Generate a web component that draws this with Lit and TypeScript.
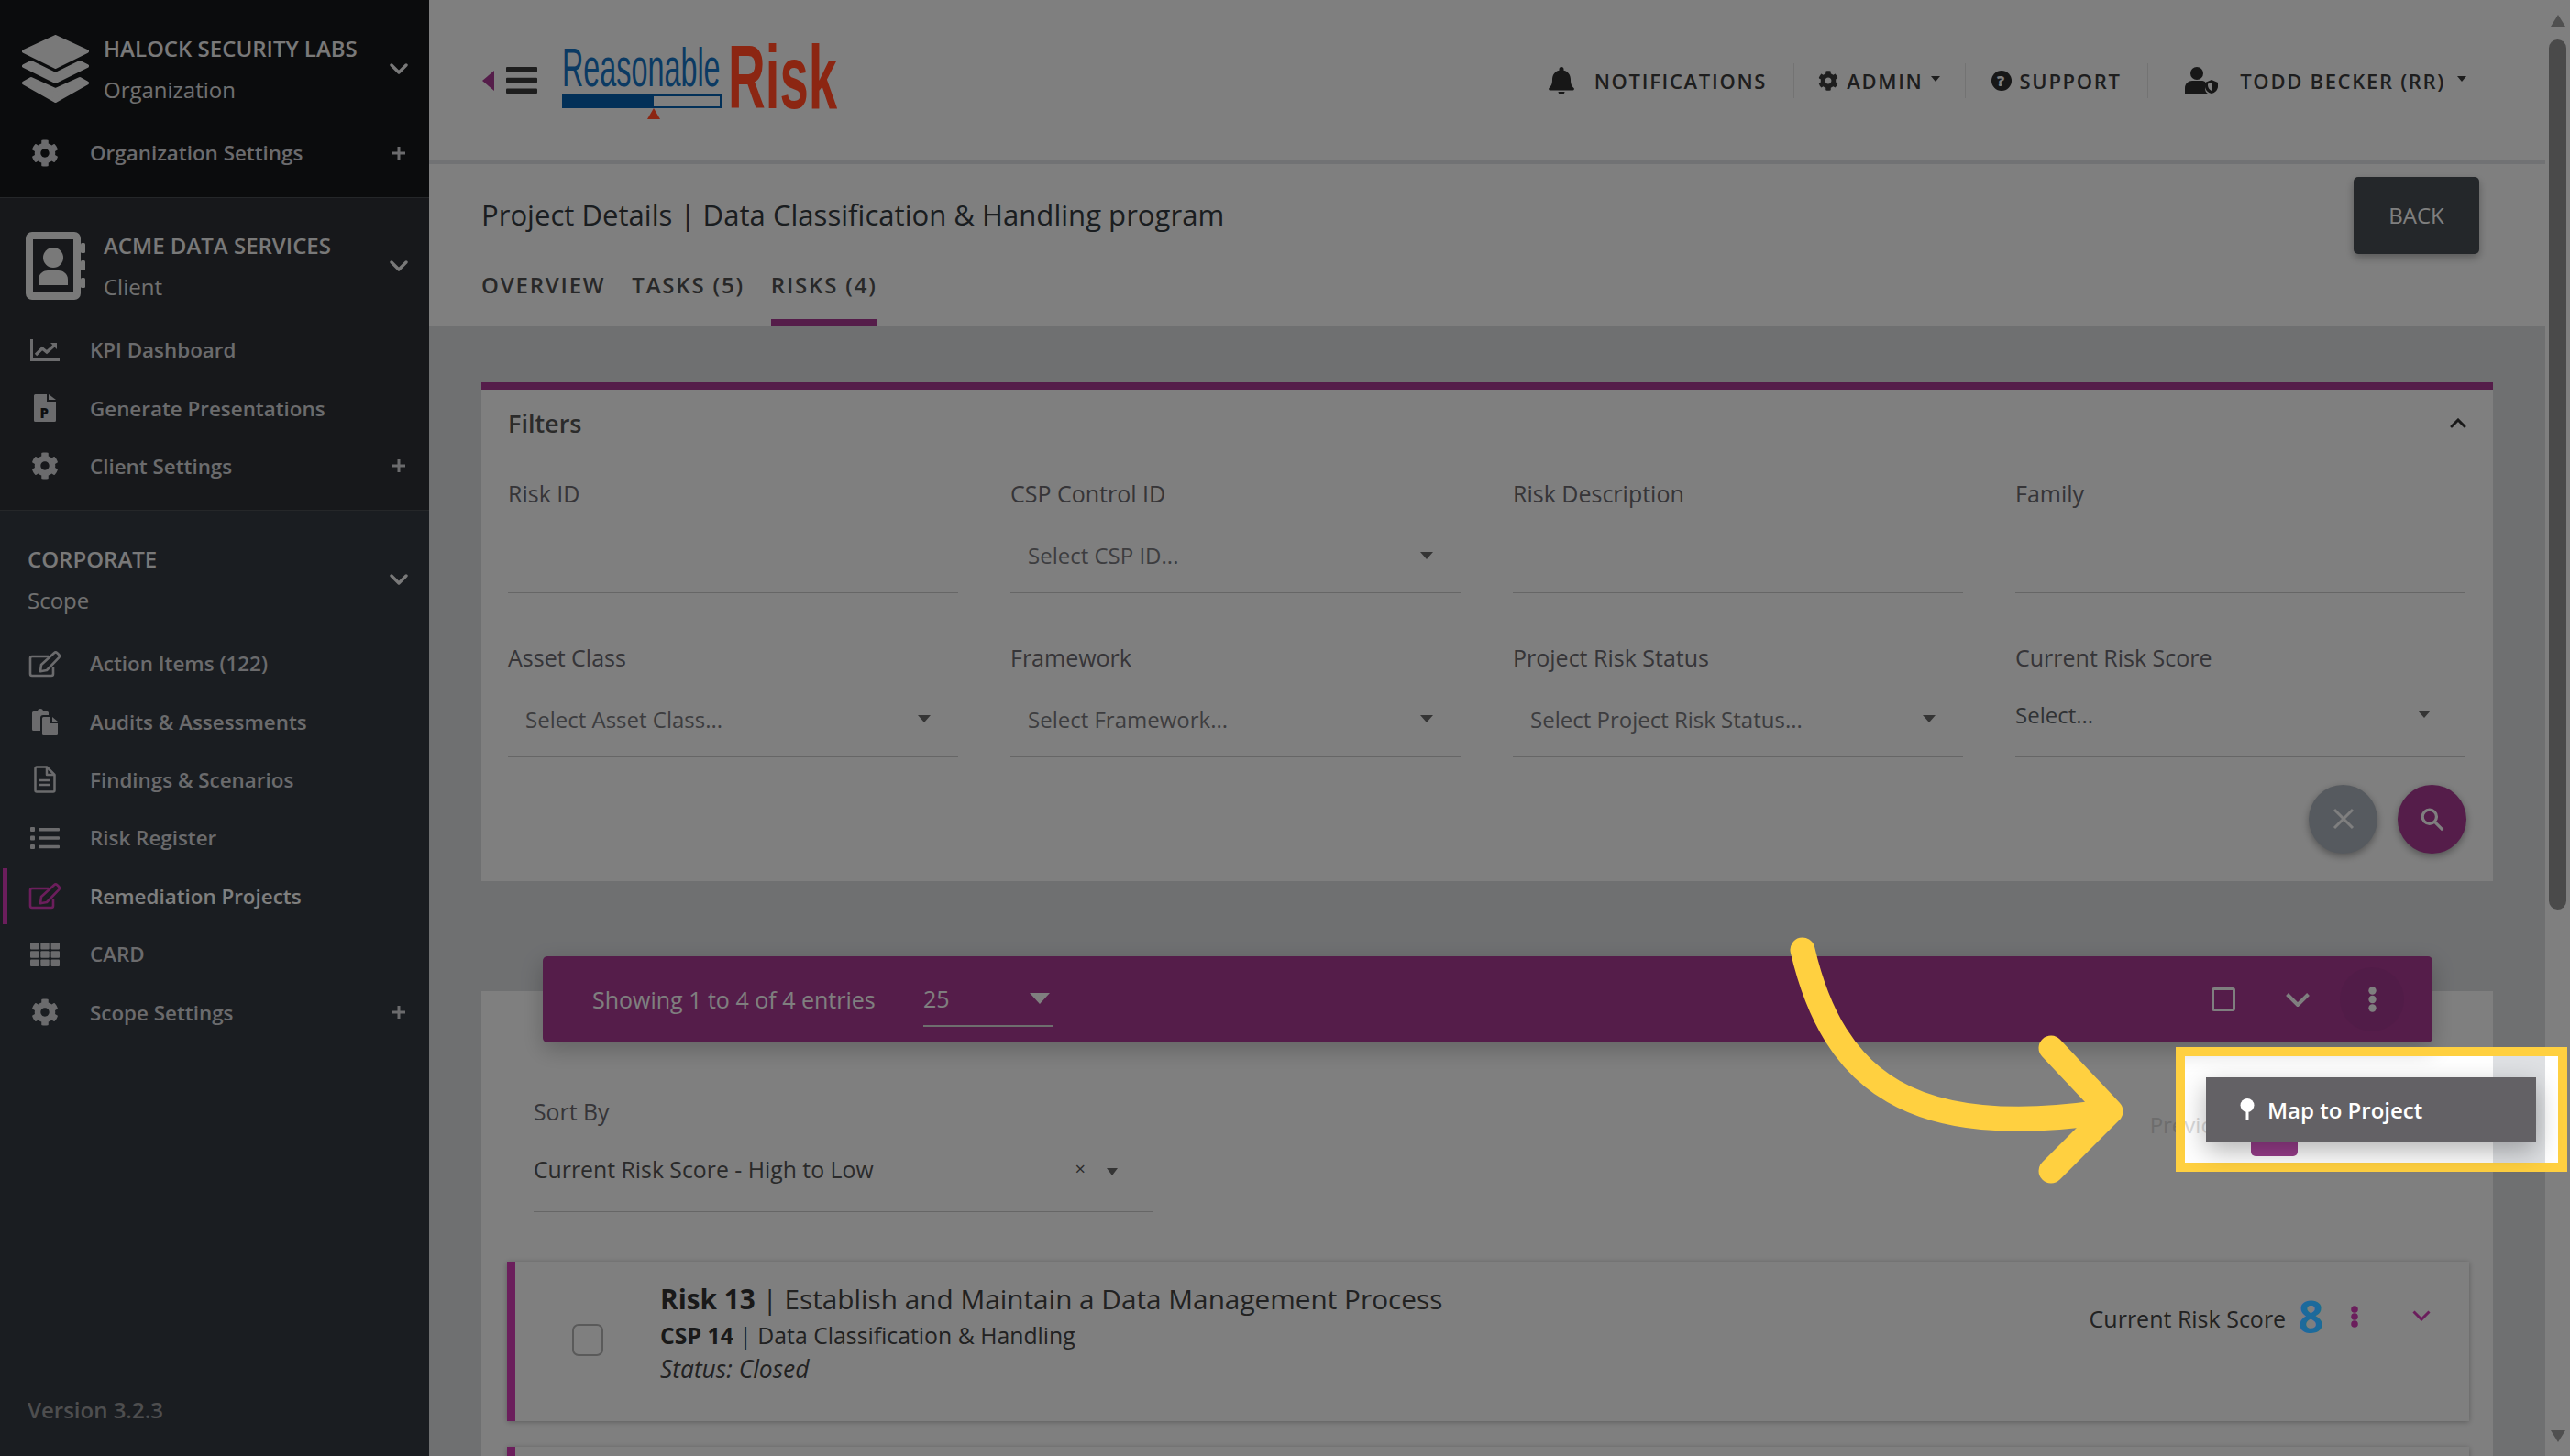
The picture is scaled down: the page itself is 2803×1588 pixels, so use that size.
import { LitElement, html, css, svg } from "lit";
import { customElement } from "lit/decorators.js";

const gearPath =
  "M487.4 315.7l-42.6-24.6c4.3-23.2 4.3-47 0-70.2l42.6-24.6c4.9-2.8 7.1-8.6 5.5-14-11.1-35.6-30-67.8-54.7-94.6-3.8-4.1-10-5.1-14.8-2.3L380.8 110c-17.9-15.4-38.5-27.3-60.8-35.1V25.8c0-5.6-3.9-10.5-9.4-11.7-36.7-8.2-74.3-7.8-109.2 0-5.5 1.2-9.4 6.1-9.4 11.7V75c-22.2 7.9-42.8 19.8-60.8 35.1L88.7 85.5c-4.9-2.8-11-1.9-14.8 2.3-24.7 26.7-43.6 58.9-54.7 94.6-1.7 5.4.6 11.2 5.5 14L67.3 221c-4.3 23.2-4.3 47 0 70.2l-42.6 24.6c-4.9 2.8-7.1 8.6-5.5 14 11.1 35.6 30 67.8 54.7 94.6 3.8 4.1 10 5.1 14.8 2.3l42.6-24.6c17.9 15.4 38.5 27.3 60.8 35.1v49.2c0 5.6 3.9 10.5 9.4 11.7 36.7 8.2 74.3 7.8 109.2 0 5.5-1.2 9.4-6.1 9.4-11.7v-49.2c22.2-7.9 42.8-19.8 60.8-35.1l42.6 24.6c4.9 2.8 11 1.9 14.8-2.3 24.7-26.7 43.6-58.9 54.7-94.6 1.5-5.5-.7-11.3-5.6-14.1zM256 336c-44.1 0-80-35.9-80-80s35.9-80 80-80 80 35.9 80 80-35.9 80-80 80z";

const gear = (size = 30) => html`<svg width=${size} height=${size} viewBox="0 0 512 512" fill="currentColor"><path d=${gearPath}></path></svg>`;

const chevron = (w = 20, h = 12, sw = 3.4) =>
  html`<svg width=${w} height=${h} viewBox="0 0 20 12" fill="none" stroke="currentColor" stroke-width=${sw} stroke-linecap="round" stroke-linejoin="round" preserveAspectRatio="none"><path d="M2 2l8 8 8-8"></path></svg>`;

const plus = html`<svg width="14" height="14" viewBox="0 0 14 14" stroke="currentColor" stroke-width="3"><path d="M0 7h14M7 0v14"></path></svg>`;

const editIcon = html`<svg width="36" height="30" viewBox="0 0 36 30" fill="none" stroke="currentColor" stroke-width="2.6" stroke-linejoin="round"><path d="M22 7H4a2 2 0 0 0-2 2v17a2 2 0 0 0 2 2h21a2 2 0 0 0 2-2v-8"></path><path d="M14 16L28 3.2a2.4 2.4 0 0 1 3.3 0l1.8 1.8a2.4 2.4 0 0 1 0 3.3L20 22l-7 1.2z"></path></svg>`;

const sideIcons: Record<string, unknown> = {
  gear: gear(30),
  chart: html`<svg width="32" height="24" viewBox="0 0 32 24" fill="none" stroke="currentColor"><path d="M1.5 0v22.5H32" stroke-width="3"></path><path d="M6 17l7-7 5 4 9-8" stroke-width="3.400"></path><path d="M22 4h7v7z" fill="currentColor" stroke="none"></path></svg>`,
  ppt: html`<svg width="24" height="30" viewBox="0 0 24 30"><path d="M0 1.5A1.5 1.5 0 0 1 1.5 0H14v8h10v20.5a1.5 1.5 0 0 1-1.5 1.5h-21A1.5 1.5 0 0 1 0 28.500z" fill="currentColor"></path><path d="M16 0l8 6h-8z" fill="currentColor"></path><text x="6.500" y="26" font-family="Open Sans, sans-serif" font-weight="800" font-size="15" fill="#1b1c20">P</text></svg>`,
  edit: editIcon,
  copies: html`<svg width="30" height="30" viewBox="0 0 30 30" fill="currentColor"><path d="M1 5.500A1.500 1.500 0 0 1 2.500 4H7a3 3 0 0 1 6 0h4.500A1.500 1.500 0 0 1 19 5.500V8h-6a3 3 0 0 0-3 3v14H2.500A1.500 1.500 0 0 1 1 23.500z"></path><path d="M12 11.500A1.500 1.500 0 0 1 13.500 10H21v7h8v11.500a1.500 1.500 0 0 1-1.500 1.500h-14a1.500 1.500 0 0 1-1.500-1.500zM23 10l6 5h-6z"></path></svg>`,
  file: html`<svg width="24" height="30" viewBox="0 0 24 30" fill="none" stroke="currentColor" stroke-width="2.500" stroke-linejoin="round"><path d="M1.500 3a1.500 1.500 0 0 1 1.500-1.500h11L22.500 10v17a1.500 1.500 0 0 1-1.500 1.500H3A1.500 1.500 0 0 1 1.500 27z"></path><path d="M14 2v8h8M6 16h12M6 21h12"></path></svg>`,
  list: html`<svg width="32" height="24" viewBox="0 0 32 24" fill="currentColor"><rect y="0" width="5" height="5" rx="1"></rect><rect y="9.500" width="5" height="5" rx="1"></rect><rect y="19" width="5" height="5" rx="1"></rect><rect x="9" y="1" width="23" height="3.400" rx="1"></rect><rect x="9" y="10.300" width="23" height="3.400" rx="1"></rect><rect x="9" y="19.800" width="23" height="3.400" rx="1"></rect></svg>`,
  grid: html`<svg width="32" height="26" viewBox="0 0 32 26" fill="currentColor">${[0, 1, 2].map((r) => [0, 1, 2].map((c) => svg`<rect x=${c * 11.3} y=${r * 9.2} width="9.400" height="7.500" rx="1"></rect>`))}</svg>`,
};

type Item = { icon: string; label: string; plus?: boolean; active?: boolean };

const orgItems: Item[] = [{ icon: "gear", label: "Organization Settings", plus: true }];
const clientItems: Item[] = [
  { icon: "chart", label: "KPI Dashboard" },
  { icon: "ppt", label: "Generate Presentations" },
  { icon: "gear", label: "Client Settings", plus: true },
];
const scopeItems: Item[] = [
  { icon: "edit", label: "Action Items (122)" },
  { icon: "copies", label: "Audits & Assessments" },
  { icon: "file", label: "Findings & Scenarios" },
  { icon: "list", label: "Risk Register" },
  { icon: "edit", label: "Remediation Projects", active: true },
  { icon: "grid", label: "CARD" },
  { icon: "gear", label: "Scope Settings", plus: true },
];

const filterFields = [
  { label: "Risk ID" },
  { label: "CSP Control ID", value: "Select CSP ID..." },
  { label: "Risk Description" },
  { label: "Family" },
  { label: "Asset Class", value: "Select Asset Class..." },
  { label: "Framework", value: "Select Framework..." },
  { label: "Project Risk Status", value: "Select Project Risk Status..." },
  { label: "Current Risk Score", value: "Select...", plain: true },
];

@customElement("app-root")
export class AppRoot extends LitElement {
  static styles = css`
    :host {
      display: block;
      position: relative;
      width: 2803px;
      height: 1588px;
      overflow: hidden;
      font-family: "Open Sans", sans-serif;
      background: #fff;
      color: #444;
    }
    * {
      box-sizing: border-box;
    }
    svg {
      display: block;
      flex: none;
    }
    .page {
      display: flex;
      height: 1588px;
    }

    /* sidebar */
    .side {
      width: 468px;
      flex: none;
      display: flex;
      flex-direction: column;
      background: #343a42;
      color: #dcdde0;
    }
    .block {
      border-bottom: 1px solid #4b4e52;
    }
    .block.org {
      background: #16181a;
      height: 216px;
      padding-top: 30px;
    }
    .block.client {
      background: #2e3036;
      height: 341px;
      padding-top: 29px;
    }
    .block.scope {
      border-bottom: 0;
      flex: 1;
      padding-top: 30px;
      display: flex;
      flex-direction: column;
    }
    .head {
      display: flex;
      align-items: center;
      height: 90px;
      padding-right: 23px;
      margin-bottom: 15px;
      color: #f2f2f2;
    }
    .head-icon {
      width: 113px;
      flex: none;
      padding-left: 24px;
    }
    .head-icon.book {
      padding-left: 28px;
    }
    .scope .head {
      padding-left: 30px;
    }
    .head-text {
      flex: 1;
      font-size: 24px;
      line-height: 45px;
    }
    .head-text b {
      display: block;
      font-weight: 600;
    }
    .head-text span {
      display: block;
      color: #e0e0e0;
    }
    .item {
      position: relative;
      display: flex;
      align-items: center;
      height: 63.4px;
      padding-right: 26px;
      font-size: 22.4px;
      font-weight: 600;
      color: #d6d7da;
    }
    .item .ico {
      width: 38px;
      margin: 0 30px;
      flex: none;
      display: flex;
      justify-content: center;
    }
    .item .plus {
      margin-left: auto;
    }
    .item.active {
      color: #fff;
    }
    .item.active .ico {
      color: #d63cb8;
    }
    .item.active::before {
      content: "";
      position: absolute;
      left: 3px;
      top: 1px;
      width: 5px;
      height: 61px;
      background: #d63cb8;
    }
    .version {
      margin-top: auto;
      padding: 0 0 32px 30px;
      font-size: 24px;
      line-height: 36px;
      font-weight: 600;
      color: #9c9d9f;
    }

    /* main column */
    .main {
      width: 2308px;
      flex: none;
      background: #dee0e3;
      display: flex;
      flex-direction: column;
    }
    .top {
      height: 179px;
      flex: none;
      background: #fff;
      border-bottom: 4px solid #e2e4e8;
      display: flex;
      align-items: center;
      padding-left: 58px;
      color: #3a3a3a;
    }
    .burger {
      margin-left: 13px;
    }
    .logo {
      margin-left: 27px;
      position: relative;
      z-index: 5;
      overflow: visible;
    }
    .nav {
      margin-left: auto;
      display: flex;
      align-items: center;
      padding-right: 86px;
      font-size: 22px;
      font-weight: 600;
      letter-spacing: 1.7px;
      color: #3c3c3c;
    }
    .nav-item {
      display: flex;
      align-items: center;
      height: 38px;
      padding: 0 28px;
      gap: 9px;
      border-right: 1px solid #e6e6e6;
      white-space: nowrap;
    }
    .nav-item.notif {
      gap: 22px;
      padding-right: 29px;
    }
    .nav-item.admin {
      padding: 0 27px 0 26px;
    }
    .nav-item.user {
      border-right: 0;
      padding: 0 0 0 40.5px;
      gap: 24px;
    }
    .caret {
      width: 0;
      height: 0;
      border-left: 5.500px solid transparent;
      border-right: 5.500px solid transparent;
      border-top: 6px solid currentColor;
      margin: -4px 0 0 -1px;
      flex: none;
    }
    .nav-item.user .caret {
      margin-left: -11px;
    }
    .sub {
      height: 177px;
      flex: none;
      background: #fff;
      padding: 0 72px 0 57px;
      position: relative;
    }
    .sub-row {
      display: flex;
      justify-content: space-between;
      align-items: center;
      padding-top: 14px;
      height: 98px;
    }
    .title {
      font-size: 31.1px;
      margin-top: -2px;
      color: #343a40;
    }
    .back {
      width: 137px;
      height: 84px;
      padding-bottom: 2px;
      border-radius: 5px;
      background: #484e54;
      color: #fff;
      font-size: 24px;
      display: flex;
      align-items: center;
      justify-content: center;
      box-shadow: 0 4px 10px rgba(0, 0, 0, 0.3);
    }
    .tabs {
      display: flex;
      gap: 29px;
      height: 79px;
      font-size: 24px;
      font-weight: 600;
      letter-spacing: 1.8px;
      color: #505050;
    }
    .tab {
      height: 79px;
      line-height: 68px;
      white-space: nowrap;
    }
    .tab.on {
      border-bottom: 8px solid #aa3a94;
    }

    /* filters */
    .content {
      flex: 1;
      padding: 61px 57px 0 57px;
      min-height: 0;
    }
    .card {
      background: #fff;
    }
    .filters {
      height: 544px;
      border-top: 8px solid #aa3a94;
      padding: 0 29px;
    }
    .filters-head {
      height: 72px;
      display: flex;
      align-items: center;
      justify-content: space-between;
      font-size: 27px;
      font-weight: 600;
      color: #565656;
      margin-bottom: 26px;
    }
    .filters-head svg {
      color: #333;
    }
    .grid {
      display: grid;
      grid-template-columns: repeat(4, 491px);
      column-gap: 57px;
      grid-auto-rows: 124px;
      row-gap: 54.500px;
    }
    .field {
      display: flex;
      flex-direction: column;
      font-size: 25px;
      color: #6c6a70;
      font-weight: 500;
    }
    .field label {
      line-height: 30px;
    }
    .input {
      flex: 1;
      border-bottom: 1px solid #ccc;
      display: flex;
      align-items: center;
      justify-content: space-between;
      padding: 12px 30px 0 19px;
      font-size: 24px;
      font-weight: 400;
      color: #7a7a7e;
    }
    .input.plain {
      padding: 2px 38px 0 0;
      font-weight: 500;
      color: #5e6468;
    }
    .arrow {
      width: 0;
      height: 0;
      border-left: 7px solid transparent;
      border-right: 7px solid transparent;
      border-top: 8px solid #6a6a6a;
    }
    .actions {
      display: flex;
      justify-content: flex-end;
      gap: 22px;
      margin-top: 30px;
    }
    .round {
      width: 75px;
      height: 75px;
      border-radius: 50%;
      display: flex;
      align-items: center;
      justify-content: center;
      color: #fff;
      box-shadow: 0 3px 8px rgba(0, 0, 0, 0.35);
    }
    .round.clear {
      background: #acb4be;
    }
    .round.go {
      background: #aa3a94;
    }

    /* results */
    .results {
      margin-top: 120px;
      height: 520px;
    }
    .bar {
      position: relative;
      top: -38px;
      margin: 0 66px 0 67px;
      height: 94px;
      border-radius: 5px;
      background: #aa3a94;
      color: #fff;
      display: flex;
      align-items: center;
      padding: 0 31px 0 54px;
      font-size: 25px;
      box-shadow: 0 8px 24px rgba(0, 0, 0, 0.22);
    }
    .bar .count {
      width: 361px;
      font-weight: 500;
    }
    .page-size {
      width: 141px;
      height: 60px;
      border-bottom: 2px solid #ddd;
      display: flex;
      align-items: center;
      justify-content: space-between;
      padding: 0 3px 0 0;
    }
    .page-size .arrow {
      border-top-color: #fff;
      border-left-width: 11px;
      border-right-width: 11px;
      border-top-width: 12px;
    }
    .bar-tools {
      margin-left: auto;
      display: flex;
      align-items: center;
      gap: 55px;
    }
    .dots-wrap {
      width: 70px;
      height: 70px;
      border-radius: 50%;
      background: #a33890;
      display: flex;
      align-items: center;
      justify-content: center;
      margin-left: -22px;
    }
    .sort-row {
      margin-top: 21px;
      padding: 0 0 0 57px;
      display: flex;
      justify-content: space-between;
    }
    .sort {
      width: 676px;
      font-size: 24.8px;
      color: #6c6a70;
    }
    .sort label {
      display: block;
      line-height: 32px;
    }
    .sort-value {
      height: 94px;
      border-bottom: 1px solid #ccc;
      display: flex;
      align-items: center;
      color: #555;
    }
    .sort-value .x {
      margin-left: auto;
      font-size: 20px;
    }
    .sort-value .arrow {
      margin: 6px 39px 0 23px;
      border-left-width: 6px;
      border-right-width: 6px;
    }
    .pager {
      display: flex;
      align-items: flex-start;
      gap: 14px;
      margin: 9px 213px 0 0;
      font-size: 24px;
      line-height: 44px;
      color: #dadada;
    }
    .pager .num {
      width: 51px;
      height: 56px;
      border-radius: 5px;
      background: #993d8c;
    }
    .risk {
      display: flex;
      align-items: flex-start;
      height: 174px;
      margin: 54px 26px 0 28px;
      border-left: 9px solid #d63cb8;
      box-shadow: 0 1px 6px rgba(0, 0, 0, 0.28);
      background: #fff;
      position: relative;
    }
    .risk + .risk {
      margin-top: 28px;
    }
    .check {
      width: 34px;
      height: 35px;
      margin: 68px 0 0 62px;
      border: 2px solid #b5b5b5;
      border-radius: 7px;
      flex: none;
    }
    .risk-text {
      margin: 21px 0 0 62px;
      color: #444;
    }
    .risk-title {
      font-size: 29.75px;
      line-height: 40px;
    }
    .risk-title b,
    .risk-csp b {
      font-weight: 700;
      color: #333;
    }
    .risk-csp {
      font-size: 24.8px;
      line-height: 36px;
      margin-top: 1px;
    }
    .risk-status {
      font-size: 26.4px;
      line-height: 38px;
      font-style: italic;
    }
    .risk-score {
      margin: 38px 42px 0 auto;
      height: 48px;
      display: flex;
      align-items: center;
      font-size: 25px;
      color: #444;
    }
    .score {
      position: relative;
      z-index: 5;
      font-size: 48px;
      line-height: 48px;
      font-weight: 700;
      color: #1c6a9c;
      margin: -5px 30px 0 13.4px;
    }
    .risk-dots {
      color: #d63cb8;
      margin: -4px 59px 0 0;
    }
    .risk-chev {
      color: #d63cb8;
      margin-top: -6px;
    }

    /* scrollbar */
    .scrollbar {
      width: 27px;
      flex: none;
      background: #fff;
      display: flex;
      flex-direction: column;
      align-items: center;
    }
    .sb-up,
    .sb-down {
      width: 0;
      height: 0;
      border-left: 8px solid transparent;
      border-right: 8px solid transparent;
    }
    .sb-up {
      margin-top: 16px;
      border-bottom: 13px solid #a0a0a0;
    }
    .sb-down {
      margin-top: auto;
      margin-bottom: 15px;
      border-top: 13px solid #a0a0a0;
    }
    .thumb {
      width: 19px;
      height: 949px;
      margin-top: 14px;
      border-radius: 10px;
      background: #949494;
    }

    /* walkthrough overlay */
    .spot {
      position: absolute;
      left: 2383px;
      top: 1152px;
      width: 407px;
      height: 116px;
      z-index: 3;
      box-shadow: 0 0 0 10px #ffd040, 0 0 0 3000px rgba(0, 0, 0, 0.5);
    }
    .tip {
      position: absolute;
      left: 2406px;
      top: 1175px;
      width: 360px;
      height: 70px;
      z-index: 4;
      background: #636165;
      color: #fff;
      display: flex;
      align-items: center;
      gap: 14px;
      padding-left: 37px;
      font-size: 24px;
      font-weight: 600;
      box-shadow: 0 10px 28px rgba(0, 0, 0, 0.3);
    }
    .pointer {
      position: absolute;
      left: 0;
      top: 0;
      z-index: 4;
    }
  `;

  private renderItem(it: Item) {
    return html`<div class="item ${it.active ? "active" : ""}">
      <span class="ico">${sideIcons[it.icon]}</span>
      <span>${it.label}</span>
      ${it.plus ? html`<span class="plus">${plus}</span>` : ""}
    </div>`;
  }

  render() {
    return html`
      <div class="page">
        <aside class="side">
          <section class="block org">
            <div class="head">
              <span class="head-icon">
                <svg width="73" height="74" viewBox="0 0 73 74" fill="currentColor" stroke="currentColor" stroke-width="4" stroke-linejoin="round">
                  <path d="M36.500 2L71 18 36.500 35 2 18z"></path>
                  <path d="M10 30L36.500 43 63 30l8 4-34.500 17L2 34z"></path>
                  <path d="M10 48L36.500 60 63 48l8 4.500L36.500 72 2 52.500z"></path>
                </svg>
              </span>
              <div class="head-text"><b>HALOCK SECURITY LABS</b><span>Organization</span></div>
              ${chevron()}
            </div>
            ${orgItems.map((i) => this.renderItem(i))}
          </section>
          <section class="block client">
            <div class="head">
              <span class="head-icon book">
                <svg width="65" height="74" viewBox="0 0 65 74" fill="currentColor">
                  <path fill-rule="evenodd" d="M7 0h46a7 7 0 0 1 7 7v60a7 7 0 0 1-7 7H7a7 7 0 0 1-7-7V7a7 7 0 0 1 7-7zm1 8v58h44V8z"></path>
                  <rect x="60" y="12" width="5" height="11" rx="1.500"></rect>
                  <rect x="60" y="31" width="5" height="11" rx="1.500"></rect>
                  <rect x="60" y="50" width="5" height="11" rx="1.500"></rect>
                  <circle cx="30" cy="28" r="11"></circle>
                  <path d="M14 58v-6c0-7 6-10 10-10h12c4 0 10 3 10 10v6z"></path>
                </svg>
              </span>
              <div class="head-text"><b>ACME DATA SERVICES</b><span>Client</span></div>
              ${chevron()}
            </div>
            ${clientItems.map((i) => this.renderItem(i))}
          </section>
          <section class="block scope">
            <div class="head">
              <div class="head-text"><b>CORPORATE</b><span>Scope</span></div>
              ${chevron()}
            </div>
            ${scopeItems.map((i) => this.renderItem(i))}
            <div class="version">Version 3.2.3</div>
          </section>
        </aside>

        <div class="main">
          <header class="top">
            <svg width="13" height="22" viewBox="0 0 13 22" fill="#aa3a94"><path d="M13 0v22L0 11z"></path></svg>
            <svg class="burger" width="34" height="29" viewBox="0 0 34 29" fill="#3c3c3c"><rect width="34" height="5.500" rx="1"></rect><rect y="11.700" width="34" height="5.500" rx="1"></rect><rect y="23.500" width="34" height="5.500" rx="1"></rect></svg>
            <svg class="logo" width="300" height="90" viewBox="0 0 300 90">
              <text transform="scale(.539 1)" x="0" y="51" font-family="Liberation Sans, sans-serif" font-size="60" fill="#0b3a63">Reasonable</text>
              <text transform="scale(.575 1)" x="315" y="75" font-family="Liberation Sans, sans-serif" font-weight="700" font-size="98" fill="#8c2612">Risk</text>
              <rect x="1" y="61" width="172" height="13" fill="none" stroke="#023058" stroke-width="2"></rect>
              <rect x="0" y="60" width="100" height="15" fill="#023058"></rect>
              <path d="M100 75l7 12H93z" fill="#8c2612"></path>
            </svg>
            <nav class="nav">
              <div class="nav-item notif">
                <svg width="28" height="30" viewBox="0 0 28 30" fill="#2e2e2e"><path d="M14 0a2.500 2.500 0 0 1 2.500 2.500v1.200C21.500 4.700 24 9 24 14c0 5 1.500 7 3.500 9a1.500 1.500 0 0 1-1 2.500h-25a1.500 1.500 0 0 1-1-2.500C2.500 21 4 19 4 14 4 9 6.500 4.700 11.500 3.700V2.500A2.500 2.500 0 0 1 14 0z"></path><path d="M10.500 27h7a3.500 3 0 0 1-7 0z"></path></svg>
                NOTIFICATIONS
              </div>
              <div class="nav-item admin">
                ${gear(22)} ADMIN <span class="caret"></span>
              </div>
              <div class="nav-item">
                <svg width="22" height="22" viewBox="0 0 22 22"><circle cx="11" cy="11" r="11" fill="#2e2e2e"></circle><text x="11" y="17" text-anchor="middle" font-family="Open Sans, sans-serif" font-weight="800" font-size="16" fill="#fff">?</text></svg>
                SUPPORT
              </div>
              <div class="nav-item user">
                <svg width="36" height="29" viewBox="0 0 36 29" fill="#2e2e2e"><circle cx="13" cy="7" r="7"></circle><path d="M0 29v-6c0-5 4-8 8-8h10c1.500 0 3 .5 4 1v7c0 3 1 5 3 6z"></path><path d="M29 14l7 3v4c0 4-3 7-7 8-4-1-7-4-7-8v-4z"></path><path d="M29 17v9c-2-1-4-3-4-6v-1.500z" fill="#fff"></path></svg>
                TODD BECKER (RR) <span class="caret"></span>
              </div>
            </nav>
          </header>

          <div class="sub">
            <div class="sub-row">
              <div class="title">Project Details | Data Classification &amp; Handling program</div>
              <div class="back">BACK</div>
            </div>
            <div class="tabs">
              <div class="tab">OVERVIEW</div>
              <div class="tab">TASKS (5)</div>
              <div class="tab on">RISKS (4)</div>
            </div>
          </div>

          <div class="content">
            <section class="card filters">
              <div class="filters-head">
                Filters
                <svg width="18" height="11" viewBox="0 0 18 11" fill="none" stroke="currentColor" stroke-width="3" stroke-linecap="round"><path d="M2 9l7-7 7 7"></path></svg>
              </div>
              <div class="grid">
                ${filterFields.map(
                  (f) => html`<div class="field">
                    <label>${f.label}</label>
                    <div class="input ${f.plain ? "plain" : ""}">
                      ${f.value ? html`<span>${f.value}</span><span class="arrow"></span>` : ""}
                    </div>
                  </div>`
                )}
              </div>
              <div class="actions">
                <div class="round clear">
                  <svg width="24" height="24" viewBox="0 0 24 24" stroke="currentColor" stroke-width="3"><path d="M2 2l20 20M22 2L2 22"></path></svg>
                </div>
                <div class="round go">
                  <svg width="27" height="27" viewBox="0 0 30 30" fill="none" stroke="currentColor" stroke-width="3.600"><circle cx="12" cy="12" r="8.500"></circle><path d="M18 18l10 10"></path></svg>
                </div>
              </div>
            </section>

            <section class="card results">
              <div class="bar">
                <span class="count">Showing 1 to 4 of 4 entries</span>
                <span class="page-size"><span>25</span><span class="arrow"></span></span>
                <div class="bar-tools">
                  <svg width="26" height="26" viewBox="0 0 26 26" fill="none" stroke="#fff" stroke-width="3"><rect x="1.500" y="1.500" width="23" height="23" rx="1.500"></rect></svg>
                  <svg width="26" height="15" viewBox="0 0 26 15" fill="none" stroke="#fff" stroke-width="4"><path d="M1.500 1.500L13 13 24.500 1.500"></path></svg>
                  <div class="dots-wrap">
                    <svg width="9" height="28" viewBox="0 0 9 28" fill="#fff"><circle cx="4.500" cy="4.500" r="4.200"></circle><circle cx="4.500" cy="14" r="4.200"></circle><circle cx="4.500" cy="23.500" r="4.200"></circle></svg>
                  </div>
                </div>
              </div>
              <div class="sort-row">
                <div class="sort">
                  <label>Sort By</label>
                  <div class="sort-value">
                    <span>Current Risk Score - High to Low</span>
                    <span class="x">×</span>
                    <span class="arrow"></span>
                  </div>
                </div>
                <div class="pager">
                  <span>Previous</span>
                  <span class="num"></span>
                </div>
              </div>
              <div class="risk">
                <div class="check"></div>
                <div class="risk-text">
                  <div class="risk-title"><b>Risk 13</b> | Establish and Maintain a Data Management Process</div>
                  <div class="risk-csp"><b>CSP 14</b> | Data Classification &amp; Handling</div>
                  <div class="risk-status">Status: Closed</div>
                </div>
                <div class="risk-score">
                  Current Risk Score
                  <span class="score">8</span>
                  <svg class="risk-dots" width="8" height="24" viewBox="0 0 8 24" fill="currentColor"><circle cx="4" cy="4" r="3.800"></circle><circle cx="4" cy="12" r="3.800"></circle><circle cx="4" cy="20" r="3.800"></circle></svg>
                  <svg class="risk-chev" width="20" height="12" viewBox="0 0 20 12" fill="none" stroke="currentColor" stroke-width="3"><path d="M1.500 1.500l8.500 8.500 8.500-8.500"></path></svg>
                </div>
              </div>
              <div class="risk"></div>
            </section>
          </div>
        </div>

        <div class="scrollbar">
          <div class="sb-up"></div>
          <div class="thumb"></div>
          <div class="sb-down"></div>
        </div>
      </div>

      <div class="spot"></div>
      <div class="tip">
        <svg width="16" height="24" viewBox="0 0 16 24" fill="#fff"><circle cx="8" cy="7.500" r="7.500"></circle><rect x="6.500" y="14" width="3" height="10" rx="1"></rect></svg>
        Map to Project
      </div>
      <svg class="pointer" width="2803" height="1588" viewBox="0 0 2803 1588" fill="none" stroke="#ffd040" stroke-width="27" stroke-linecap="round" stroke-linejoin="round">
        <path d="M1966 1036C2000 1180 2085 1245 2300 1212"></path>
        <path d="M2237 1143L2302 1212 2237 1277"></path>
      </svg>
    `;
  }
}
